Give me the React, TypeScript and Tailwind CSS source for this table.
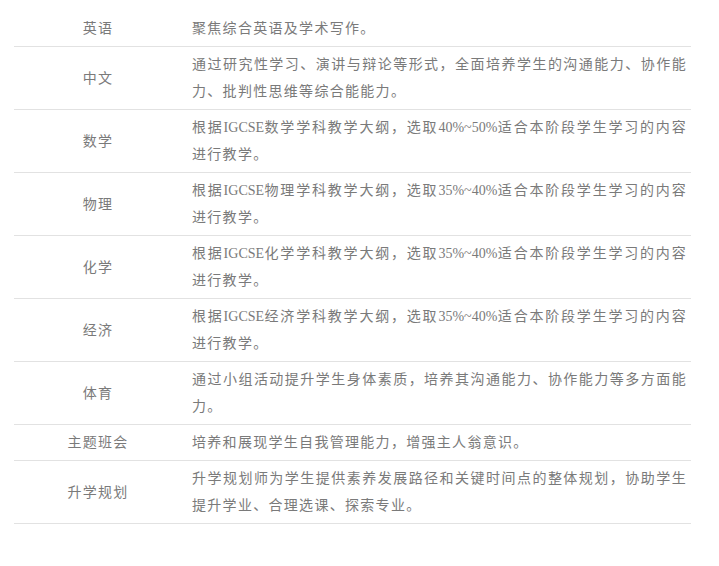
const rows: { label: string; text: string }[] = [
  { label: '英语', text: '聚焦综合英语及学术写作。' },
  { label: '中文', text: '通过研究性学习、演讲与辩论等形式，全面培养学生的沟通能力、协作能力、批判性思维等综合能能力。' },
  { label: '数学', text: '根据IGCSE数学学科教学大纲，选取40%~50%适合本阶段学生学习的内容进行教学。' },
  { label: '物理', text: '根据IGCSE物理学科教学大纲，选取35%~40%适合本阶段学生学习的内容进行教学。' },
  { label: '化学', text: '根据IGCSE化学学科教学大纲，选取35%~40%适合本阶段学生学习的内容进行教学。' },
  { label: '经济', text: '根据IGCSE经济学科教学大纲，选取35%~40%适合本阶段学生学习的内容进行教学。' },
  { label: '体育', text: '通过小组活动提升学生身体素质，培养其沟通能力、协作能力等多方面能力。' },
  { label: '主题班会', text: '培养和展现学生自我管理能力，增强主人翁意识。' },
  { label: '升学规划', text: '升学规划师为学生提供素养发展路径和关键时间点的整体规划，协助学生提升学业、合理选课、探索专业。' },
];

// latin runs are set without the extra letter spacing, like the source page
function RichText({ text }: { text: string }) {
  const parts = text.split(/([\x20-\x7e]+)/).filter(Boolean);
  return (
    <>
      {parts.map((p, i) =>
        /^[\x20-\x7e]+$/.test(p) ? (
          <span key={i} className="tracking-normal">
            {p}
          </span>
        ) : (
          <span key={i}>{p}</span>
        )
      )}
    </>
  );
}

export default function App() {
  return (
    <div
      className="w-[719px] h-[566px] bg-white pt-[11px] pl-[14px] text-[14px] leading-[27px] tracking-[1.3px] text-[#7a7a7a]"
      style={{ fontFamily: '"Liberation Serif", "Noto Sans CJK SC", serif' }}
    >
      <div className="w-[677px] flex flex-col">
        {rows.map((row) => (
          <div key={row.label} className="flex border-b border-[#e2e2e2]">
            <div className="w-[168px] shrink-0 flex items-center justify-center py-1">
              {row.label}
            </div>
            <div className="flex-1 pl-[10px] pr-[4px] py-1 text-justify">
              <RichText text={row.text} />
            </div>
          </div>
        ))}
      </div>
    </div>
  );
}
